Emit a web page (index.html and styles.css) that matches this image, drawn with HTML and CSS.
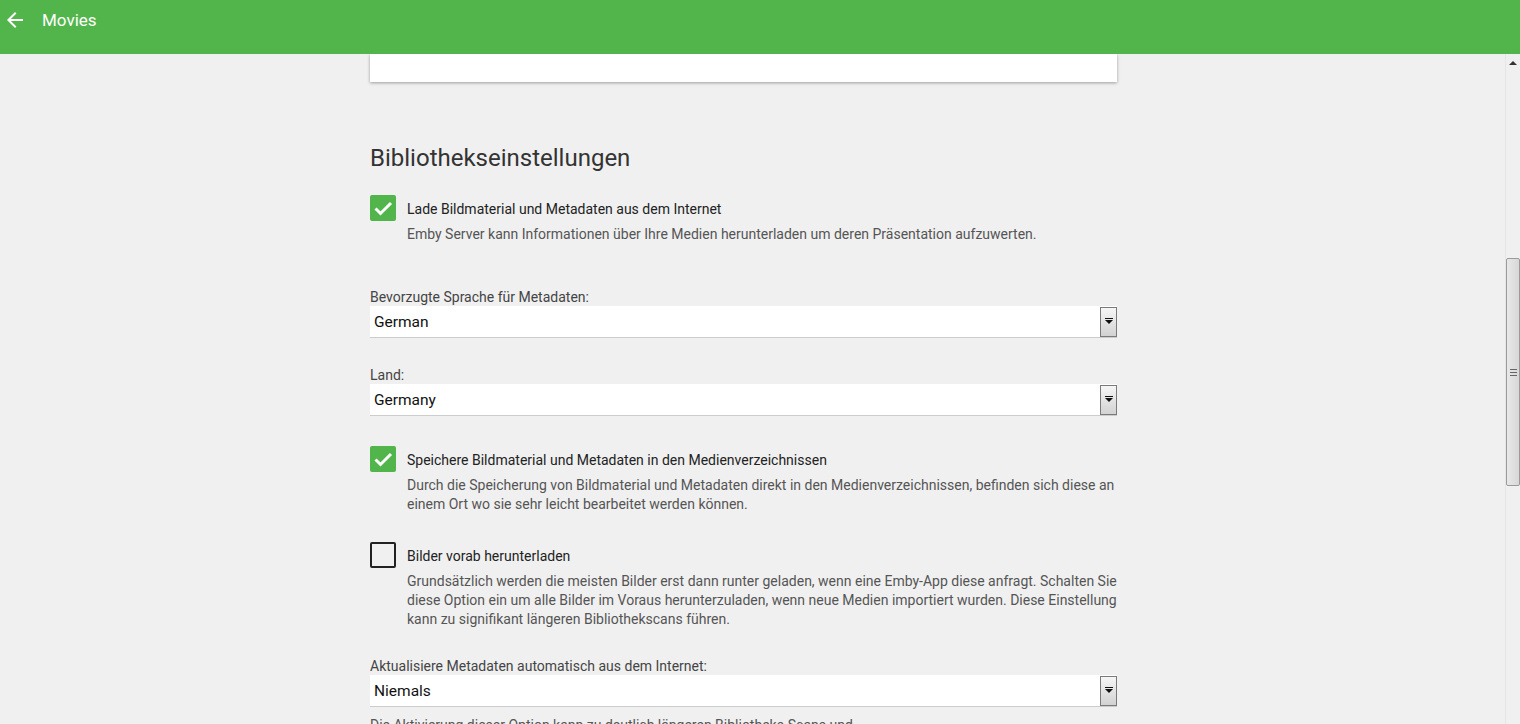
FILE: index.html
```
<!DOCTYPE html>
<html lang="de">
<head>
  <meta charset="UTF-8">
  <title>Movies</title>
  <link rel="stylesheet" href="styles.css">
</head>
<body>

<div class="app-header">
  <a class="back-btn" href="javascript:;">
    <svg width="24" height="24" viewBox="0 0 24 24"><path d="M20 11H7.83l5.59-5.59L12 4l-8 8 8 8 1.41-1.41L7.83 13H20v-2z" fill="#fff"/></svg>
  </a>
  <span class="header-title">Movies</span>
</div>

<div class="page">
  <div class="main">
    <div class="content">
      <div class="card"></div>

      <h2 class="section-title">Bibliothekseinstellungen</h2>

      <!-- Metadaten herunterladen -->
      <div class="check-item first">
        <span class="checkbox checked">
          <svg width="26" height="26" viewBox="0 0 26 26"><path d="M5.5 13.5l5 5L21 8" stroke="#fff" stroke-width="3" fill="none"/></svg>
        </span>
        <div class="check-text">
          <div class="check-label">Lade Bildmaterial und Metadaten aus dem Internet</div>
          <div class="check-desc">Emby Server kann Informationen über Ihre Medien herunterladen um deren Präsentation aufzuwerten.</div>
        </div>
      </div>

      <div class="field field-lang">
        <label class="field-label">Bevorzugte Sprache für Metadaten:</label>
        <div class="select">
          <span class="select-value">German</span>
          <span class="select-btn"><i></i></span>
        </div>
      </div>

      <div class="field field-country">
        <label class="field-label">Land:</label>
        <div class="select">
          <span class="select-value">Germany</span>
          <span class="select-btn"><i></i></span>
        </div>
      </div>

      <div class="check-item second">
        <span class="checkbox checked">
          <svg width="26" height="26" viewBox="0 0 26 26"><path d="M5.5 13.5l5 5L21 8" stroke="#fff" stroke-width="3" fill="none"/></svg>
        </span>
        <div class="check-text">
          <div class="check-label">Speichere Bildmaterial und Metadaten in den Medienverzeichnissen</div>
          <div class="check-desc">Durch die Speicherung von Bildmaterial und Metadaten direkt in den Medienverzeichnissen, befinden sich diese an einem Ort wo sie sehr leicht bearbeitet werden können.</div>
        </div>
      </div>

      <div class="check-item third">
        <span class="checkbox"></span>
        <div class="check-text">
          <div class="check-label">Bilder vorab herunterladen</div>
          <div class="check-desc">Grundsätzlich werden die meisten Bilder erst dann runter geladen, wenn eine Emby-App diese anfragt. Schalten Sie diese Option ein um alle Bilder im Voraus herunterzuladen, wenn neue Medien importiert wurden. Diese Einstellung kann zu signifikant längeren Bibliothekscans führen.</div>
        </div>
      </div>

      <div class="field field-refresh">
        <label class="field-label">Aktualisiere Metadaten automatisch aus dem Internet:</label>
        <div class="select">
          <span class="select-value">Niemals</span>
          <span class="select-btn"><i></i></span>
        </div>
        <div class="field-desc">Die Aktivierung dieser Option kann zu deutlich längeren Bibliotheks-Scans und</div>
      </div>
    </div>
  </div>

  <!-- Bildlaufleiste -->
  <div class="scrollbar">
    <div class="scroll-up"><i></i></div>
    <div class="scroll-thumb"><i></i></div>
  </div>
</div>

</body>
</html>
```

FILE: styles.css
```
* {
  margin: 0;
  padding: 0;
  box-sizing: border-box;
}

html,
body {
  height: 100%;
}

body {
  overflow: hidden;
  background: #f0f0f0;
  font-family: Roboto, "Liberation Sans", sans-serif;
  display: flex;
  flex-direction: column;
}

a {
  text-decoration: none;
}

.app-header {
  height: 54px;
  flex: none;
  background: #52b54b;
  display: flex;
  align-items: center;
  padding: 0 0 14px 3px;
  position: relative;
  z-index: 2;
}

.back-btn {
  display: flex;
  width: 24px;
  height: 24px;
}

.header-title {
  margin-left: 15px;
  color: #fff;
  font-size: 17px;
}

.page {
  flex: 1;
  display: flex;
  min-height: 0;
}

.main {
  flex: 1;
  overflow: hidden;
}

.content {
  width: 747px;
  margin-left: 370px;
}

.card {
  height: 28px;
  background: #fff;
  box-shadow: 0 1px 3px rgba(0, 0, 0, 0.35);
}

.section-title {
  margin-top: 61px;
  font-size: 24px;
  line-height: 30px;
  font-weight: 400;
  color: #333;
}

.check-item {
  display: flex;
  gap: 11px;
}

.check-item.first {
  margin-top: 22px;
}

.check-item.second {
  margin-top: 30px;
}

.check-item.third {
  margin-top: 28px;
}

.checkbox {
  flex: none;
  width: 26px;
  height: 26px;
  border: 2px solid #222;
  border-radius: 2px;
}

.checkbox.checked {
  border: 0;
  background: #52b54b;
}

.checkbox svg {
  display: block;
}

.check-label {
  padding-top: 1px;
  font-size: 14px;
  line-height: 26px;
  color: #222;
}

.check-desc {
  margin-top: 3px;
  font-size: 14px;
  line-height: 19px;
  color: #555;
}

.field-label {
  display: block;
  font-size: 14px;
  line-height: 18px;
  color: #444;
}

.field-lang {
  margin-top: 44px;
}

.field-country {
  margin-top: 28px;
}

.field-refresh {
  margin-top: 28px;
}

.select {
  height: 32px;
  background: #fff;
  border-bottom: 1px solid #ccc;
  display: flex;
  align-items: center;
  padding-left: 4px;
}

.select-value {
  flex: 1;
  font-size: 15.5px;
  color: #111;
}

.select-btn {
  width: 17px;
  height: 30px;
  margin-top: 1px;
  border: 1px solid #7a7a7a;
  background: linear-gradient(#f6f6f6, #d2d2d2);
  display: flex;
  align-items: center;
  justify-content: center;
}

.select-btn i {
  width: 0;
  height: 0;
  border-left: 4px solid transparent;
  border-right: 4px solid transparent;
  border-top: 4px solid #111;
  position: relative;
}

.select-btn i:before {
  content: "";
  position: absolute;
  left: -4px;
  top: -6px;
  width: 8px;
  height: 1px;
  background: #111;
}

.field-desc {
  margin-top: 9px;
  font-size: 14px;
  line-height: 19px;
  color: #555;
}

.scrollbar {
  width: 15px;
  flex: none;
  background: #f0f0f0;
  border-left: 1px solid #e6e6e6;
  display: flex;
  flex-direction: column;
}

.scroll-up {
  height: 17px;
  display: flex;
  align-items: center;
  justify-content: center;
}

.scroll-up i {
  width: 0;
  height: 0;
  border-left: 4px solid transparent;
  border-right: 4px solid transparent;
  border-bottom: 4px solid #333;
}

.scroll-thumb {
  margin-top: 187px;
  height: 228px;
  border: 1px solid #9a9a9a;
  border-radius: 2px;
  background: linear-gradient(90deg, #e8e8e8, #d8d8d8);
  display: flex;
  align-items: center;
  justify-content: center;
}

.scroll-thumb i {
  width: 7px;
  height: 7px;
  border-top: 1px solid #666;
  border-bottom: 1px solid #666;
  position: relative;
}

.scroll-thumb i:before {
  content: "";
  position: absolute;
  left: 0;
  top: 2px;
  width: 7px;
  height: 1px;
  background: #666;
}
```
